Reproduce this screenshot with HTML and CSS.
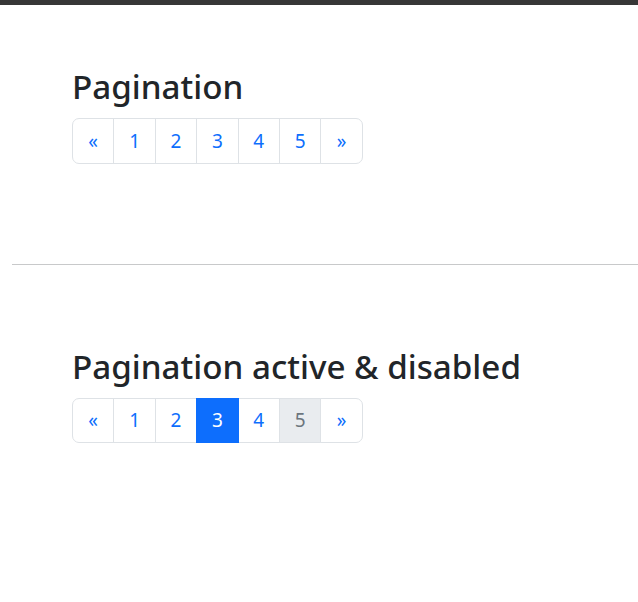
FILE: index.html
```html
<!DOCTYPE html>
<html lang="en">
<head>
<meta charset="utf-8">
<title>Pagination</title>
<link rel="stylesheet" href="styles.css">
</head>
<body>
<div class="topbar"></div>
<section class="block block-first">
  <h2 class="title">Pagination</h2>
  <ul class="pagination">
    <li class="page-item"><a class="page-link" href="#">&laquo;</a></li>
    <li class="page-item"><a class="page-link" href="#">1</a></li>
    <li class="page-item"><a class="page-link" href="#">2</a></li>
    <li class="page-item"><a class="page-link" href="#">3</a></li>
    <li class="page-item"><a class="page-link" href="#">4</a></li>
    <li class="page-item"><a class="page-link" href="#">5</a></li>
    <li class="page-item"><a class="page-link" href="#">&raquo;</a></li>
  </ul>
</section>
<hr class="divider">
<section class="block block-second">
  <h2 class="title">Pagination active &amp; disabled</h2>
  <ul class="pagination">
    <li class="page-item"><a class="page-link" href="#">&laquo;</a></li>
    <li class="page-item"><a class="page-link" href="#">1</a></li>
    <li class="page-item"><a class="page-link" href="#">2</a></li>
    <li class="page-item active"><a class="page-link" href="#">3</a></li>
    <li class="page-item"><a class="page-link" href="#">4</a></li>
    <li class="page-item disabled"><span class="page-link">5</span></li>
    <li class="page-item"><a class="page-link" href="#">&raquo;</a></li>
  </ul>
</section>
</body>
</html>
```
FILE: styles.css
```css
* { box-sizing: border-box; }
html, body {
  margin: 0;
  padding: 0;
  background: #fff;
  font-family: "Noto Sans", "Open Sans", sans-serif;
  color: #212529;
}
.topbar {
  height: 5px;
  background: #373737;
}
.block {
  padding-left: 72px;
}
.block-first {
  padding-top: 62px;
  padding-bottom: 100px;
}
.block-second {
  padding-top: 82px;
}
.title {
  margin: 0 0 11px 0;
  font-size: 33.2px;
  font-weight: 500;
  line-height: 1.2;
  color: #212529;
}
.divider {
  margin: 0 0 0 12px;
  border: 0;
  border-top: 1px solid #c8c9ca;
  height: 0;
}
.pagination {
  display: flex;
  list-style: none;
  margin: 0;
  padding: 0;
}
.page-link {
  display: block;
  padding: 7.7px 0;
  width: 42.4px;
  text-align: center;
  font-size: 19px;
  line-height: 1.5;
  color: #0d6efd;
  text-decoration: none;
  background: #fff;
  border: 1px solid #dee2e6;
}
.page-item + .page-item .page-link {
  margin-left: -1px;
}
.page-item:first-child .page-link {
  border-radius: 7px 0 0 7px;
}
.page-item:last-child .page-link {
  border-radius: 0 7px 7px 0;
}
.page-item.active .page-link {
  position: relative;
  z-index: 1;
  background: #0d6efd;
  border-color: #0d6efd;
  color: #fff;
}
.page-item.disabled .page-link {
  background: #e9ecef;
  color: #6c757d;
}
```
